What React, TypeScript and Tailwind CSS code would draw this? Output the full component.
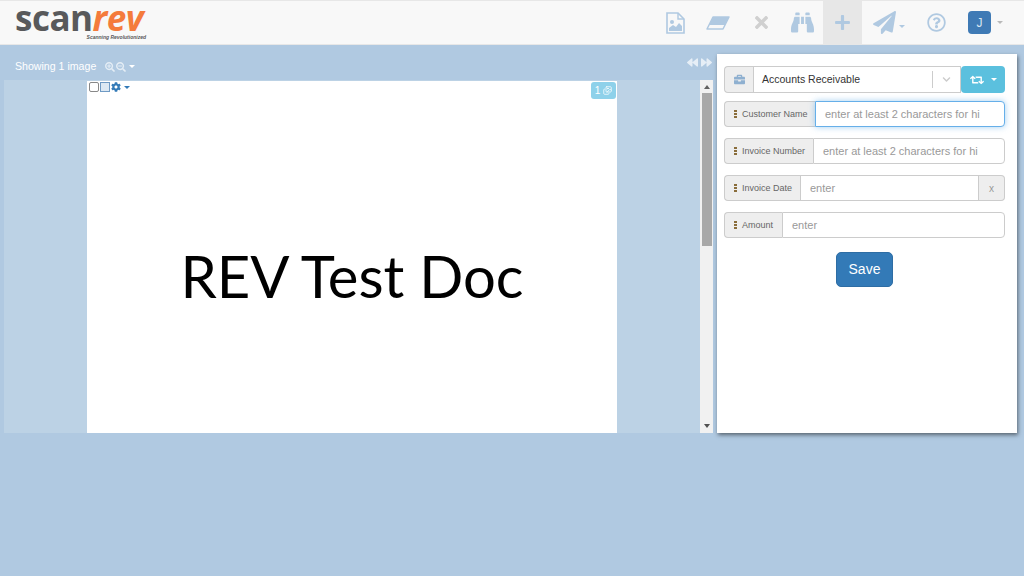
import { Images } from "lucide-react";
import { FaBinoculars, FaBriefcase, FaChevronDown, FaPaperPlane, FaPlus, FaRetweet, FaTimes, FaRegQuestionCircle, FaCog, FaForward, FaBackward, FaSearchPlus, FaSearchMinus } from "react-icons/fa";

const Caret = ({ className }: { className: string }) => (
  <span className={`inline-block w-0 h-0 border-x-[3px] border-x-transparent border-t-[3px] ${className}`} />
);

const Field = ({ label, placeholder, clear, focus, labelW }: { label: string; placeholder: string; clear?: boolean; focus?: boolean; labelW: string }) => (
  <div className="flex h-[26px] mb-[11px] text-[11px]">
    <div className={`${labelW} shrink-0 flex items-center pl-[9px] gap-[5px] bg-[#eeeeee] border border-[#cccccc] border-r-0 rounded-l-[4px] text-[#666666] text-[9px] whitespace-nowrap`}>
      <span className="flex flex-col gap-[1px] w-[3px]">
        <span className="w-[3px] h-[2px] bg-[#8a6d3b]" />
        <span className="w-[3px] h-[2px] bg-[#8a6d3b]" />
        <span className="w-[3px] h-[2px] bg-[#8a6d3b]" />
      </span>
      <span className="mt-[1px]">{label}</span>
    </div>
    <div className={`flex-1 min-w-0 flex items-center pl-[9px] bg-white border whitespace-nowrap text-[#999999] ${focus ? "border-[#66afe9] shadow-[0_0_6px_rgba(102,175,233,0.6)]" : "border-[#cccccc]"} ${clear ? "" : "rounded-r-[4px]"}`}>
      {placeholder}
    </div>
    {clear && (
      <div className="w-[26px] flex items-center justify-center bg-[#eeeeee] border border-l-0 border-[#cccccc] rounded-r-[4px] text-[#999999] text-[10px]">
        x
      </div>
    )}
  </div>
);

export default function App() {
  return (
    <div className="w-[1024px] h-[576px] overflow-hidden bg-[#b0c9e1] font-['Liberation_Sans',sans-serif] flex flex-col">
      <header className="h-[45px] shrink-0 bg-[#f8f8f8] border-y border-[#e7e7e7] flex items-center justify-between">
        <div className="ml-[15px] w-[131px] flex flex-col items-end">
          <div className="w-full h-[31px] leading-[31px] text-[35px] tracking-[-0.5px] font-bold font-['Open_Sans',sans-serif] whitespace-nowrap -mt-[4px]">
            <span className="text-[#58595b]">scan</span>
            <span className="text-[#f47b3c] italic">rev</span>
          </div>
          <div className="text-[5px] leading-[6px] italic font-bold text-[#58595b] mt-[1px]">Scanning Revolutionized</div>
        </div>
        <div className="flex items-stretch h-full text-[#b0c9e1] pr-[21px]">
          <div className="w-[42px] flex items-center justify-center">
            <svg width="19" height="22" viewBox="0 0 19 22">
              <path d="M1 1 H12 L18 7 V21 H1 Z" fill="none" stroke="currentColor" strokeWidth="1.6" />
              <path d="M12 1 V7 H18" fill="none" stroke="currentColor" strokeWidth="1.4" />
              <circle cx="6" cy="10" r="2" fill="currentColor" />
              <path d="M3 19 V16 L7 13 L10 15 L13 11 L16 14 V19 Z" fill="currentColor" />
            </svg>
          </div>
          <div className="w-[44px] flex items-center justify-center">
            <svg width="24" height="14" viewBox="0 0 24 14">
              <path d="M7 1 H23 L17 13 H1 Z" fill="none" stroke="currentColor" strokeWidth="1.5" strokeLinejoin="round" />
              <path d="M7 1 H23 L19 9 H3 Z" fill="currentColor" />
            </svg>
          </div>
          <div className="w-[42px] flex items-center justify-center text-[#d0d0d0]"><FaTimes size={19} /></div>
          <div className="w-[41px] flex items-center justify-center"><FaBinoculars size={23} /></div>
          <div className="w-[39px] flex items-center justify-center bg-[#e7e7e7]"><FaPlus size={17} /></div>
          <div className="w-[50px] flex items-center justify-center gap-[3px] pl-[3px]">
            <FaPaperPlane size={23} />
            <Caret className="border-t-[#b0c9e1] mt-[8px]" />
          </div>
          <div className="w-[48px] flex items-center justify-center"><FaRegQuestionCircle size={19} /></div>
          <div className="w-[43px] flex items-center justify-end gap-[6px]">
            <div className="w-[23px] h-[23px] rounded-[4px] bg-[#3f7ab5] text-[#dbe7f2] text-[12px] flex items-center justify-center">J</div>
            <Caret className="border-t-[#b9b9b9]" />
          </div>
        </div>
      </header>

      <main className="flex-1 flex items-start pl-[4px] pr-[7px]">
        <section className="w-[709px] shrink-0">
          <div className="h-[35px] flex items-center justify-between pl-[11px] pr-[1px] text-white">
            <div className="flex items-center text-[10.6px] mt-[9px]">
              <span>Showing 1 image</span>
              <span className="flex items-center ml-[9px] gap-[1px] text-[#e4edf5]">
                <FaSearchPlus size={10} />
                <FaSearchMinus size={10} />
              </span>
              <Caret className="border-t-white ml-[3px]" />
            </div>
            <div className="flex items-center gap-[3px] -mt-[1px] text-[#e6eef6]">
              <FaBackward size={11} />
              <FaForward size={11} />
            </div>
          </div>
          <div className="h-[353px] bg-[#bcd2e5] flex justify-between overflow-hidden">
            <div className="ml-[83px] mt-[1px] w-[530px] bg-white relative flex flex-col items-center">
              <div className="absolute left-[2px] top-[1px] flex items-center">
                <span className="w-[10px] h-[10px] border border-[#888888] rounded-[2px] bg-white" />
                <span className="w-[10px] h-[10px] ml-[1px] border border-[#6f9ac4] bg-[#dce8f3]" />
                <FaCog size={10} className="text-[#337ab7] ml-[1px]" />
                <Caret className="border-t-[#337ab7] ml-[3px]" />
              </div>
              <div className="absolute right-[1px] top-[1px] w-[25px] h-[17px] rounded-[3px] bg-[#8ed1ea] text-white text-[10px] flex items-center justify-center gap-[3px]">
                <span>1</span>
                <Images size={9} />
              </div>
              <div className="mt-[155px] text-[58px] leading-[80px] text-black font-['Lato',sans-serif] whitespace-nowrap">REV Test Doc</div>
            </div>
            <div className="w-[13px] bg-[#f1f1f1] flex flex-col items-center justify-between">
              <div className="w-full flex flex-col items-center">
                <span className="mt-[5px] w-0 h-0 border-x-[3.5px] border-x-transparent border-b-[4px] border-b-[#606060]" />
                <span className="mt-[4px] w-[10px] h-[153px] bg-[#a8a8a8]" />
              </div>
              <span className="mb-[5px] w-0 h-0 border-x-[3.5px] border-x-transparent border-t-[4px] border-t-[#505050]" />
            </div>
          </div>
        </section>

        <aside className="ml-[4px] mt-[9px] w-[300px] h-[379px] bg-white shadow-[1px_2px_4px_rgba(0,0,0,0.5)] pl-[7px] pr-[12px] pt-[12px]">
          <div className="flex h-[27px] mb-[8px]">
            <div className="w-[29px] flex items-center justify-center bg-[#eeeeee] border border-[#cccccc] border-r-0 rounded-l-[4px]">
              <FaBriefcase size={11} className="text-[#8fb0d0]" />
            </div>
            <div className="w-[208px] flex items-center justify-between bg-white border border-[#cccccc] pl-[8px] text-[10.5px] text-[#333333]">
              <span>Accounts Receivable</span>
              <div className="flex items-center">
                <span className="w-px h-[17px] bg-[#cccccc]" />
                <FaChevronDown size={9} className="text-[#cccccc] mx-[9px]" />
              </div>
            </div>
            <div className="flex-1 flex items-center justify-center gap-[7px] bg-[#5bc0de] rounded-[4px] text-white">
              <FaRetweet size={14} />
              <Caret className="border-t-white" />
            </div>
          </div>
          <Field label="Customer Name" labelW="w-[91px]" placeholder="enter at least 2 characters for hi" focus />
          <Field label="Invoice Number" labelW="w-[89px]" placeholder="enter at least 2 characters for hi" />
          <Field label="Invoice Date" labelW="w-[76px]" placeholder="enter" clear />
          <Field label="Amount" labelW="w-[58px]" placeholder="enter" />
          <div className="flex justify-center mt-[14px]">
            <button className="w-[57px] h-[35px] rounded-[5px] bg-[#337ab7] border border-[#2e6da4] text-white text-[14px]">Save</button>
          </div>
        </aside>
      </main>
    </div>
  );
}
